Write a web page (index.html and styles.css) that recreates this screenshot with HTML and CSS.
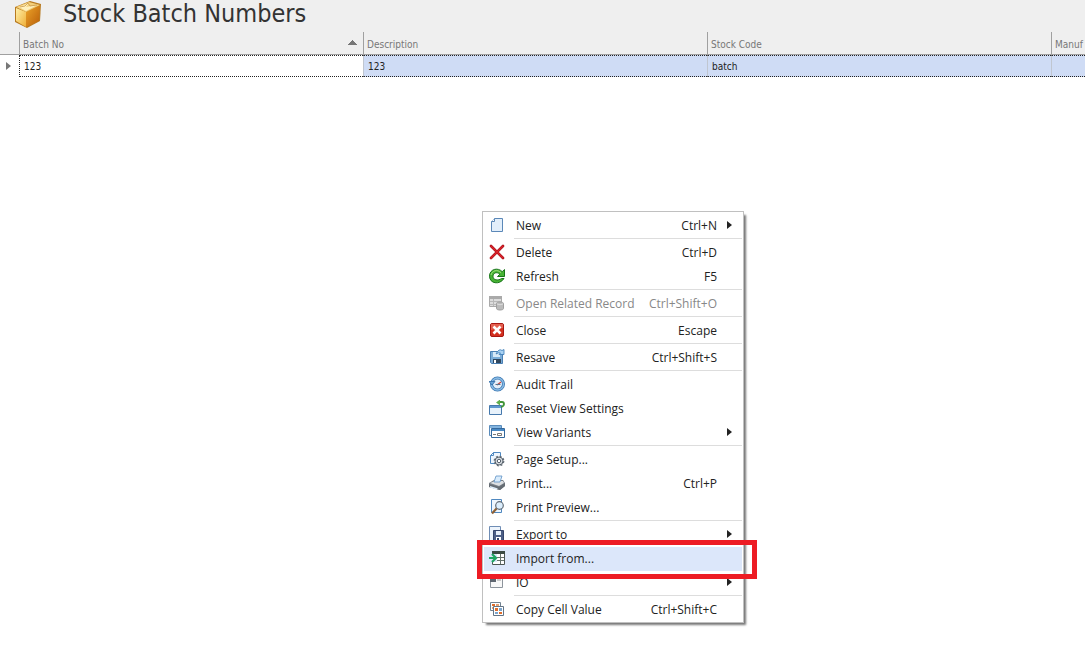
FILE: index.html
```
<!DOCTYPE html>
<html lang="en">
<head>
  <meta charset="UTF-8">
  <title>Stock Batch Numbers</title>
  <link rel="stylesheet" href="styles.css">
</head>
<body>
  <header class="page-header">
    <svg class="page-icon" viewBox="0 0 28 28">
      <defs>
        <linearGradient id="box-left" x1="0" y1="0" x2="1" y2="1">
          <stop offset="0" stop-color="#fff0a8"/><stop offset="1" stop-color="#efae36"/>
        </linearGradient>
        <linearGradient id="box-right" x1="0" y1="0" x2="1" y2="1">
          <stop offset="0" stop-color="#eda52a"/><stop offset="1" stop-color="#b95d08"/>
        </linearGradient>
      </defs>
      <path d="M1 7 16 1l11 3-1 17-13 7L1 22z" fill="#b87a20"/>
      <path d="M2 8l10 4v15L2 21z" fill="url(#box-left)"/>
      <path d="M12 12l14-7-1 16-13 6z" fill="url(#box-right)"/>
      <path d="M2 7l13-5 11 3-14 7z" fill="#f4cf79"/>
      <path d="M5 7l10-4-3 4 11-2-11 6z" fill="#fff0bd"/>
      <path d="M6 7l5-1 3-3 2 3 7-1" fill="none" stroke="#c69648" stroke-width=".8"/>
    </svg>
    <h1>Stock Batch Numbers</h1>
  </header>

  <main class="grid-view">
    <table class="grid">
      <colgroup>
        <col class="col-indicator"><col><col><col><col>
      </colgroup>
      <thead>
        <tr>
          <td></td>
          <th class="sorted">Batch No</th>
          <th>Description</th>
          <th>Stock Code</th>
          <th>Manuf</th>
        </tr>
      </thead>
      <tbody>
        <tr>
          <td class="row-indicator"><svg width="5" height="8" viewBox="0 0 5 8"><path d="M0 0l5 4-5 4z" fill="#777"/></svg></td>
          <td class="focused">123</td>
          <td>123</td>
          <td>batch</td>
          <td></td>
        </tr>
      </tbody>
    </table>
  </main>

  <menu class="context-menu">
    <li><button class="menu-item">
      <svg class="icon" viewBox="0 0 16 16"><path d="M5.500 1.500h8v13h-11v-10z" fill="#e3effb" stroke="#5b88b8"/><path d="M2.500 4.500h3v-3" fill="#fff" stroke="#5b88b8"/></svg>
      <span class="label">New</span><kbd>Ctrl+N</kbd><span class="arrow"></span>
    </button></li>
    <li class="separator"></li>
    <li><button class="menu-item">
      <svg class="icon" viewBox="0 0 16 16"><path d="M2 2l12 12M14 2L2 14" fill="none" stroke="#a50f16" stroke-width="2.600" stroke-linecap="round"/><path d="M2 2l12 12M14 2L2 14" fill="none" stroke="#dc232b" stroke-width="1.400" stroke-linecap="round"/></svg>
      <span class="label">Delete</span><kbd>Ctrl+D</kbd>
    </button></li>
    <li><button class="menu-item">
      <svg class="icon" viewBox="0 0 16 16"><path d="M15.500 1.500v7H8.500l2.400-2.300C7.500 3.300 4 5 4 8.300c0 4 5 4.700 8.500 2.200h2.500C10.500 17.500.5 15.500.5 8.200.5 1 9-1 13.200 3.700z" fill="#47b334" stroke="#187519"/><path d="M2 7c1-4.500 6.500-6 10-2.300" fill="none" stroke="#a2e27d"/></svg>
      <span class="label">Refresh</span><kbd>F5</kbd>
    </button></li>
    <li class="separator"></li>
    <li><button class="menu-item" disabled>
      <svg class="icon" viewBox="0 0 16 16"><path d="M.5 1.500h12v10H.5z" fill="#ddd" stroke="#aaa"/><path d="M0 1h13v3H0z" fill="#aaa"/><path d="M1 6.500h11M1 9.500h7M4.500 4v7" stroke="#b8b8b8"/><path d="M7.500 8.500c0-2 7-2 7 0v5c0 2-7 2-7 0z" fill="#bbb" stroke="#a0a0a0"/><path d="M8 9q3 1.500 6 0" fill="none" stroke="#ddd"/></svg>
      <span class="label">Open Related Record</span><kbd>Ctrl+Shift+O</kbd>
    </button></li>
    <li class="separator"></li>
    <li><button class="menu-item">
      <svg class="icon" viewBox="0 0 16 16"><rect x="1.500" y="1.500" width="13" height="13" rx="1.500" fill="#d3301f" stroke="#a81712"/><path d="M2 8V2h12v4z" fill="#e4604f"/><path d="M4.500 4.500l7 7M11.500 4.500l-7 7" stroke="#fff" stroke-width="2.600"/></svg>
      <span class="label">Close</span><kbd>Escape</kbd>
    </button></li>
    <li class="separator"></li>
    <li><button class="menu-item">
      <svg class="icon" viewBox="0 0 16 16"><path d="M1.500 2.500h12v12h-11l-1-1z" fill="#7badd8" stroke="#4a7fb3"/><path d="M4 3h7v5H4z" fill="#d8eaf8"/><path d="M4 10h8v4H4z" fill="#31475e"/><path d="M5 11h2v3H5z" fill="#fff"/><path d="M7 5q3-6 6-3.500l2-1v5h-5l1.500-1.500Q10 3 7 5z" fill="#a9d2f3" stroke="#3979b5" stroke-width=".8"/></svg>
      <span class="label">Resave</span><kbd>Ctrl+Shift+S</kbd>
    </button></li>
    <li class="separator"></li>
    <li><button class="menu-item">
      <svg class="icon" viewBox="0 0 16 16"><circle cx="8.500" cy="8" r="6" fill="#e4eff9" stroke="#3c78b2" stroke-width="3"/><circle cx="8.500" cy="8" r="6" fill="none" stroke="#8bbce5" stroke-width="1.400"/><path d="M0 5.500h6L3 9z" fill="#6ba6d8" stroke="#2e6ba7" stroke-width=".8"/><path d="M8 9l4-3" stroke="#c4413b" stroke-width="1.200"/><path d="M6.500 8.500h5" stroke="#55728e"/></svg>
      <span class="label">Audit Trail</span>
    </button></li>
    <li><button class="menu-item">
      <svg class="icon" viewBox="0 0 16 16"><path d="M.5 5.500h12v9H.5z" fill="#e8f2fb" stroke="#4679ad"/><path d="M1 6h11v2H1z" fill="#5d98cf"/><path d="M10 2h3q2 0 2 2t-3 3" fill="none" stroke="#419538" stroke-width="1.800"/><path d="M7 2.500l4-3v6z" fill="#61ae4d"/></svg>
      <span class="label">Reset View Settings</span>
    </button></li>
    <li><button class="menu-item">
      <svg class="icon" viewBox="0 0 16 16"><path d="M.5 1.500h12v10H.5z" fill="#e8f2fb" stroke="#5a8cbc"/><path d="M1 2h11v2H1z" fill="#83b4df"/><path d="M2.500 4.500h13v9h-13z" fill="#fff" stroke="#34689c"/><path d="M3 5h12v2H3z" fill="#4788c4"/><path d="M4 10.500h3" stroke="#777"/><path d="M8.500 9.500h4v2h-4z" fill="#fff" stroke="#777"/></svg>
      <span class="label">View Variants</span><span class="arrow"></span>
    </button></li>
    <li class="separator"></li>
    <li><button class="menu-item">
      <svg class="icon" viewBox="0 0 16 16"><path d="M4.500 1.500h7v11h-10v-8z" fill="#eef6fe" stroke="#4f88c0"/><path d="M1.500 4.500h3v-3" fill="none" stroke="#4f88c0"/><circle cx="10" cy="10" r="4.800" fill="none" stroke="#626c76" stroke-width="1.200" stroke-dasharray="2 1.770"/><circle cx="10" cy="10" r="4" fill="#d4d9de" stroke="#59636d"/><circle cx="10" cy="10" r="1.700" fill="#fff" stroke="#59636d"/></svg>
      <span class="label">Page Setup...</span>
    </button></li>
    <li><button class="menu-item">
      <svg class="icon" viewBox="0 0 16 16"><path d="M0 8l5-3h9l2 3v3l-5 4-11-3z" fill="#777f87"/><path d="M1 8l5-2h8l1 2-5 3z" fill="#dde0e3"/><path d="M5 7l2-6h6l-2 6z" fill="#d9ecfc" stroke="#5f93c5" stroke-width=".8"/><path d="M0 9l10 3 6-4v3l-5 4-11-3z" fill="#656c73"/><path d="M1 11l8 2.500-2 1-6-2z" fill="#dfeefb"/></svg>
      <span class="label">Print...</span><kbd>Ctrl+P</kbd>
    </button></li>
    <li><button class="menu-item">
      <svg class="icon" viewBox="0 0 16 16"><path d="M2.500.5h10v13h-10z" fill="#eef6fe" stroke="#4f88c0"/><path d="M8 9l-5 5.500" stroke="#8c6036" stroke-width="2.200"/><circle cx="10.500" cy="6.500" r="3.800" fill="#dceefd" stroke="#626c76" stroke-width="1.200"/></svg>
      <span class="label">Print Preview...</span>
    </button></li>
    <li class="separator"></li>
    <li><button class="menu-item">
      <svg class="icon" viewBox="0 0 16 16"><path d="M.5.5h11v14H.5z" fill="#edf4fc" stroke="#6f8db5"/><path d="M4.500 4.500h10v11h-9l-1-1z" fill="#4d5f86" stroke="#34456b"/><path d="M7 5h5v4H7z" fill="#e8f0fa"/><path d="M7 11h5v4H7z" fill="#fff"/><path d="M8 12h2v3H8z" fill="#34456b"/></svg>
      <span class="label">Export to</span><span class="arrow"></span>
    </button></li>
    <li class="highlighted"><button class="menu-item active">
      <svg class="icon" viewBox="0 0 16 16"><path d="M3.500 1.500h12v13h-12z" fill="#fff" stroke="#4d5652"/><path d="M3 1h13v3H3z" fill="#3b4a43"/><path d="M11.500 4v10M7 7.500h8M7 10.500h8" stroke="#65716b"/><path d="M0 4h8v8H0z" fill="#dce7fa"/><path d="M0 8h7M3 4l4 4-4 4" fill="none" stroke="#1fa562" stroke-width="2.200"/></svg>
      <span class="label">Import from...</span>
    </button></li>
    <li><button class="menu-item">
      <svg class="icon" viewBox="0 0 16 16"><path d="M1.500 1.500h12v12h-12z" fill="#f8f8f8" stroke="#8d949c"/><path d="M1 4h6v4H1z" fill="#5e6670"/><path d="M8 6h4" stroke="#999"/></svg>
      <span class="label">IO</span><span class="arrow"></span>
    </button></li>
    <li class="separator"></li>
    <li><button class="menu-item">
      <svg class="icon" viewBox="0 0 16 16"><path d="M1.500 1.500h10v8h-10z" fill="#fff" stroke="#718291"/><path d="M3 3h3v2H3z" fill="#df6d2a"/><path d="M7 3h3v2H7zM3 6h3v2H3z" fill="#e4a174"/><path d="M4.500 5.500h10v9h-10z" fill="#fff" stroke="#637485"/><path d="M6 7h3v3H6zM10 11h3v2h-3z" fill="#df6d2a"/><path d="M10 7h3v3h-3zM6 11h3v2H6z" fill="#7ba5cd"/></svg>
      <span class="label">Copy Cell Value</span><kbd>Ctrl+Shift+C</kbd>
    </button></li>
  </menu>
</body>
</html>
```
FILE: styles.css
```
* {
  box-sizing: border-box;
}

body {
  margin: 0;
  min-height: 100vh;
  background-color: #fff;
  color: #222;
  font-family: "Open Sans", sans-serif;
  font-size: 12px;
  overflow: hidden;
}

.page-header {
  display: flex;
  align-items: center;
  gap: 21px;
  height: 32px;
  padding: 0 14px 4px;
  background-color: #efefef;
}

.page-icon {
  width: 28px;
  height: 28px;
}

.page-header h1 {
  margin: 0;
  color: #333;
  font-family: "DejaVu Sans Condensed", "DejaVu Sans", sans-serif;
  font-size: 25px;
  font-weight: normal;
  line-height: 30px;
}

/* Grid */
.grid-view {
  overflow: hidden;
}

.grid {
  width: 1395px;
  table-layout: fixed;
  border-collapse: separate;
  border-spacing: 0;
  font-family: "DejaVu Sans Condensed", "DejaVu Sans", sans-serif;
  font-size: 10px;
  line-height: 16px;
}

.col-indicator {
  width: 19px;
}

.grid th,
.grid td {
  padding: 0 3px;
  text-align: left;
}

.grid thead {
  background-color: #efefef;
}

.grid thead th,
.grid thead td {
  height: 23px;
  padding-top: 4px;
  border-bottom: 1px solid #a0a0a0;
  color: #777;
  font-weight: normal;
}

.grid th {
  border-left: 1px solid #a0a0a0;
}

.grid .sorted {
  background: conic-gradient(from 135deg at 50% 0, #777 90deg, transparent 0) no-repeat right 6px top 8px / 10px 5px;
}

.grid tbody td {
  height: 22px;
  padding-top: 1px;
  padding-left: 4px;
  border-top: 1px dotted #222;
  border-bottom: 1px dotted #222;
  border-left: 1px solid #c0c6d0;
  background-color: #cfdcf5;
}

.grid tbody .focused {
  border-left: 1px dotted #222;
  background-color: #fff;
}

.grid tbody .row-indicator {
  padding: 0 0 0 6px;
  border: none;
  background-color: #fff;
}

.row-indicator svg {
  display: block;
}

/* Context menu */
.context-menu {
  position: absolute;
  left: 482px;
  top: 211px;
  width: 262px;
  margin: 0;
  padding: 2px 1px 0;
  list-style: none;
  background-color: #fff;
  border: 1px solid #c0c0c0;
  box-shadow: 3px 3px 2px -1px #777;
}

.menu-item {
  display: flex;
  align-items: center;
  width: 100%;
  height: 24px;
  padding: 0 10px 2px 5px;
  border: none;
  background: transparent;
  color: #222;
  font-family: inherit;
  font-size: 12px;
  text-align: left;
}

.menu-item:hover,
.menu-item.active {
  background-color: #dce7fa;
}

.menu-item:disabled {
  color: #888;
}

.icon {
  width: 16px;
  height: 16px;
  margin-right: 11px;
  flex-shrink: 0;
}

.label {
  flex: 1;
  white-space: nowrap;
}

.menu-item kbd {
  margin-right: 15px;
  font-family: inherit;
}

.arrow {
  border: 4px solid transparent;
  border-left: 5px solid #222;
  border-right: none;
}

.menu-item kbd + .arrow {
  margin-left: -5px;
}

.separator {
  height: 1px;
  margin: 0 0 2px 30px;
  background-color: #ddd;
}

.highlighted {
  position: relative;
}

/* Callout frame around the import command */
.highlighted::after {
  content: "";
  position: absolute;
  z-index: 1;
  inset: -7px -15px -8px -7px;
  border: 5px solid #ed1c24;
  pointer-events: none;
}
```
